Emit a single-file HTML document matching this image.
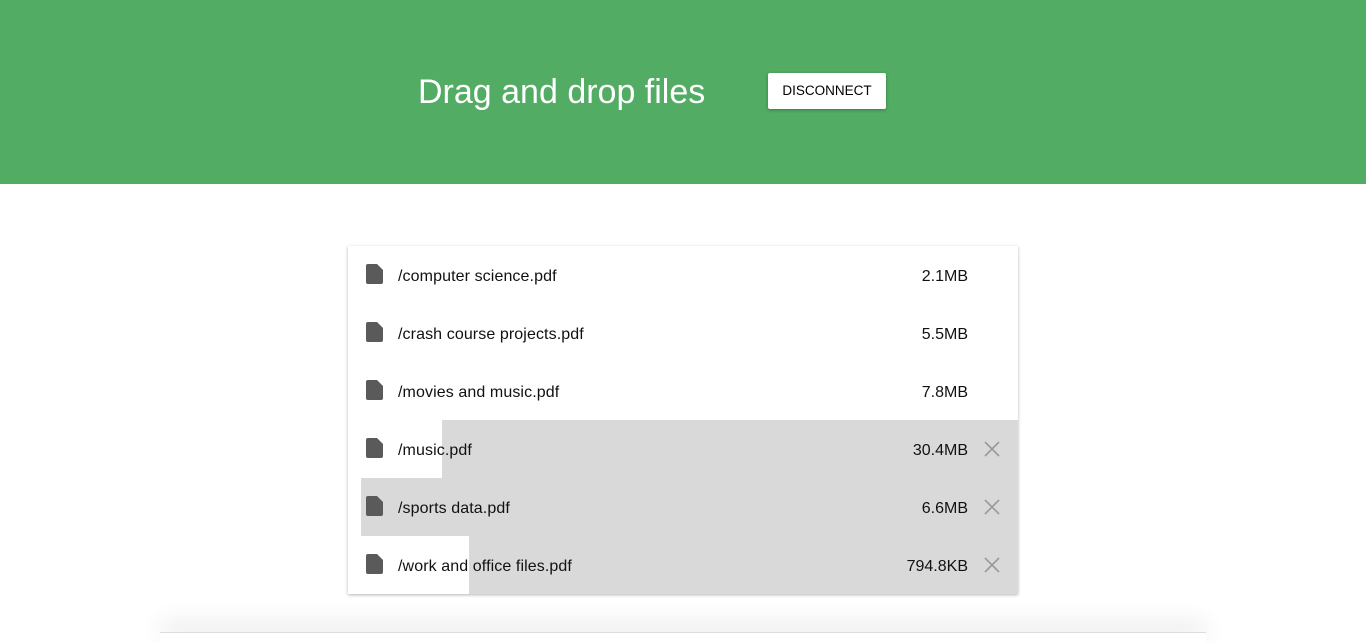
<!DOCTYPE html>
<html><head><style>
body{margin:0;width:1366px;height:634px;overflow:hidden;background:#fff;font-family:"Liberation Sans",Arial,sans-serif;position:relative}
.hdr{position:absolute;left:0;top:0;width:1366px;height:184px;background:#52ac63}
.title{position:absolute;left:418px;top:72px;font-size:34px;color:#fff;line-height:40px}
.btn{position:absolute;left:768px;top:73px;width:118px;height:36px;background:#fff;border-radius:2px;box-shadow:0 1px 3px rgba(0,0,0,.3);font-size:13.5px;color:#000;text-align:center;line-height:36px}
.card{position:absolute;left:348px;top:246px;width:670px;height:348px;background:#fff;box-shadow:0 1px 3px rgba(0,0,0,.3);overflow:hidden}
.row{position:absolute;left:0;width:670px;height:58px}
.bar{position:absolute;top:0;right:0;height:58px;background:#d9d9d9}
.ic{position:absolute;left:18px;top:18px}
.nm{position:absolute;left:50px;top:2px;line-height:58px;font-size:16px;color:#111;letter-spacing:0.1px}
.sz{position:absolute;right:50px;top:2px;line-height:58px;font-size:16px;color:#111}
.x{position:absolute;left:636px;top:21px}
.bot{position:absolute;left:160px;top:632px;width:1046px;height:10px;background:#fff;border-top:1px solid #ddd;box-shadow:0 -8px 24px rgba(0,0,0,.12)}
</style></head><body>
<div class="hdr"><div class="title">Drag and drop files</div><div class="btn">DISCONNECT</div></div>
<div class="card">
<div class="row" style="top:0"><svg class="ic" width="18" height="20" viewBox="0 0 18 20"><path d="M2 0h9l6 6v12a2 2 0 0 1-2 2H2a2 2 0 0 1-2-2V2a2 2 0 0 1 2-2z" fill="#5a5a5a"/></svg><div class="nm">/computer science.pdf</div><div class="sz">2.1MB</div></div>
<div class="row" style="top:58px"><svg class="ic" width="18" height="20" viewBox="0 0 18 20"><path d="M2 0h9l6 6v12a2 2 0 0 1-2 2H2a2 2 0 0 1-2-2V2a2 2 0 0 1 2-2z" fill="#5a5a5a"/></svg><div class="nm">/crash course projects.pdf</div><div class="sz">5.5MB</div></div>
<div class="row" style="top:116px"><svg class="ic" width="18" height="20" viewBox="0 0 18 20"><path d="M2 0h9l6 6v12a2 2 0 0 1-2 2H2a2 2 0 0 1-2-2V2a2 2 0 0 1 2-2z" fill="#5a5a5a"/></svg><div class="nm">/movies and music.pdf</div><div class="sz">7.8MB</div></div>
<div class="row" style="top:174px"><div class="bar" style="left:94px"></div><svg class="ic" width="18" height="20" viewBox="0 0 18 20"><path d="M2 0h9l6 6v12a2 2 0 0 1-2 2H2a2 2 0 0 1-2-2V2a2 2 0 0 1 2-2z" fill="#5a5a5a"/></svg><div class="nm">/music.pdf</div><div class="sz">30.4MB</div><svg class="x" width="16" height="16" viewBox="0 0 16 16"><path d="M1 1L15 15M15 1L1 15" stroke="#9a9a9a" stroke-width="1.6"/></svg></div>
<div class="row" style="top:232px"><div class="bar" style="left:13px"></div><svg class="ic" width="18" height="20" viewBox="0 0 18 20"><path d="M2 0h9l6 6v12a2 2 0 0 1-2 2H2a2 2 0 0 1-2-2V2a2 2 0 0 1 2-2z" fill="#5a5a5a"/></svg><div class="nm">/sports data.pdf</div><div class="sz">6.6MB</div><svg class="x" width="16" height="16" viewBox="0 0 16 16"><path d="M1 1L15 15M15 1L1 15" stroke="#9a9a9a" stroke-width="1.6"/></svg></div>
<div class="row" style="top:290px"><div class="bar" style="left:121px"></div><svg class="ic" width="18" height="20" viewBox="0 0 18 20"><path d="M2 0h9l6 6v12a2 2 0 0 1-2 2H2a2 2 0 0 1-2-2V2a2 2 0 0 1 2-2z" fill="#5a5a5a"/></svg><div class="nm">/work and office files.pdf</div><div class="sz">794.8KB</div><svg class="x" width="16" height="16" viewBox="0 0 16 16"><path d="M1 1L15 15M15 1L1 15" stroke="#9a9a9a" stroke-width="1.6"/></svg></div>
</div>
<div class="bot"></div>
</body></html>
